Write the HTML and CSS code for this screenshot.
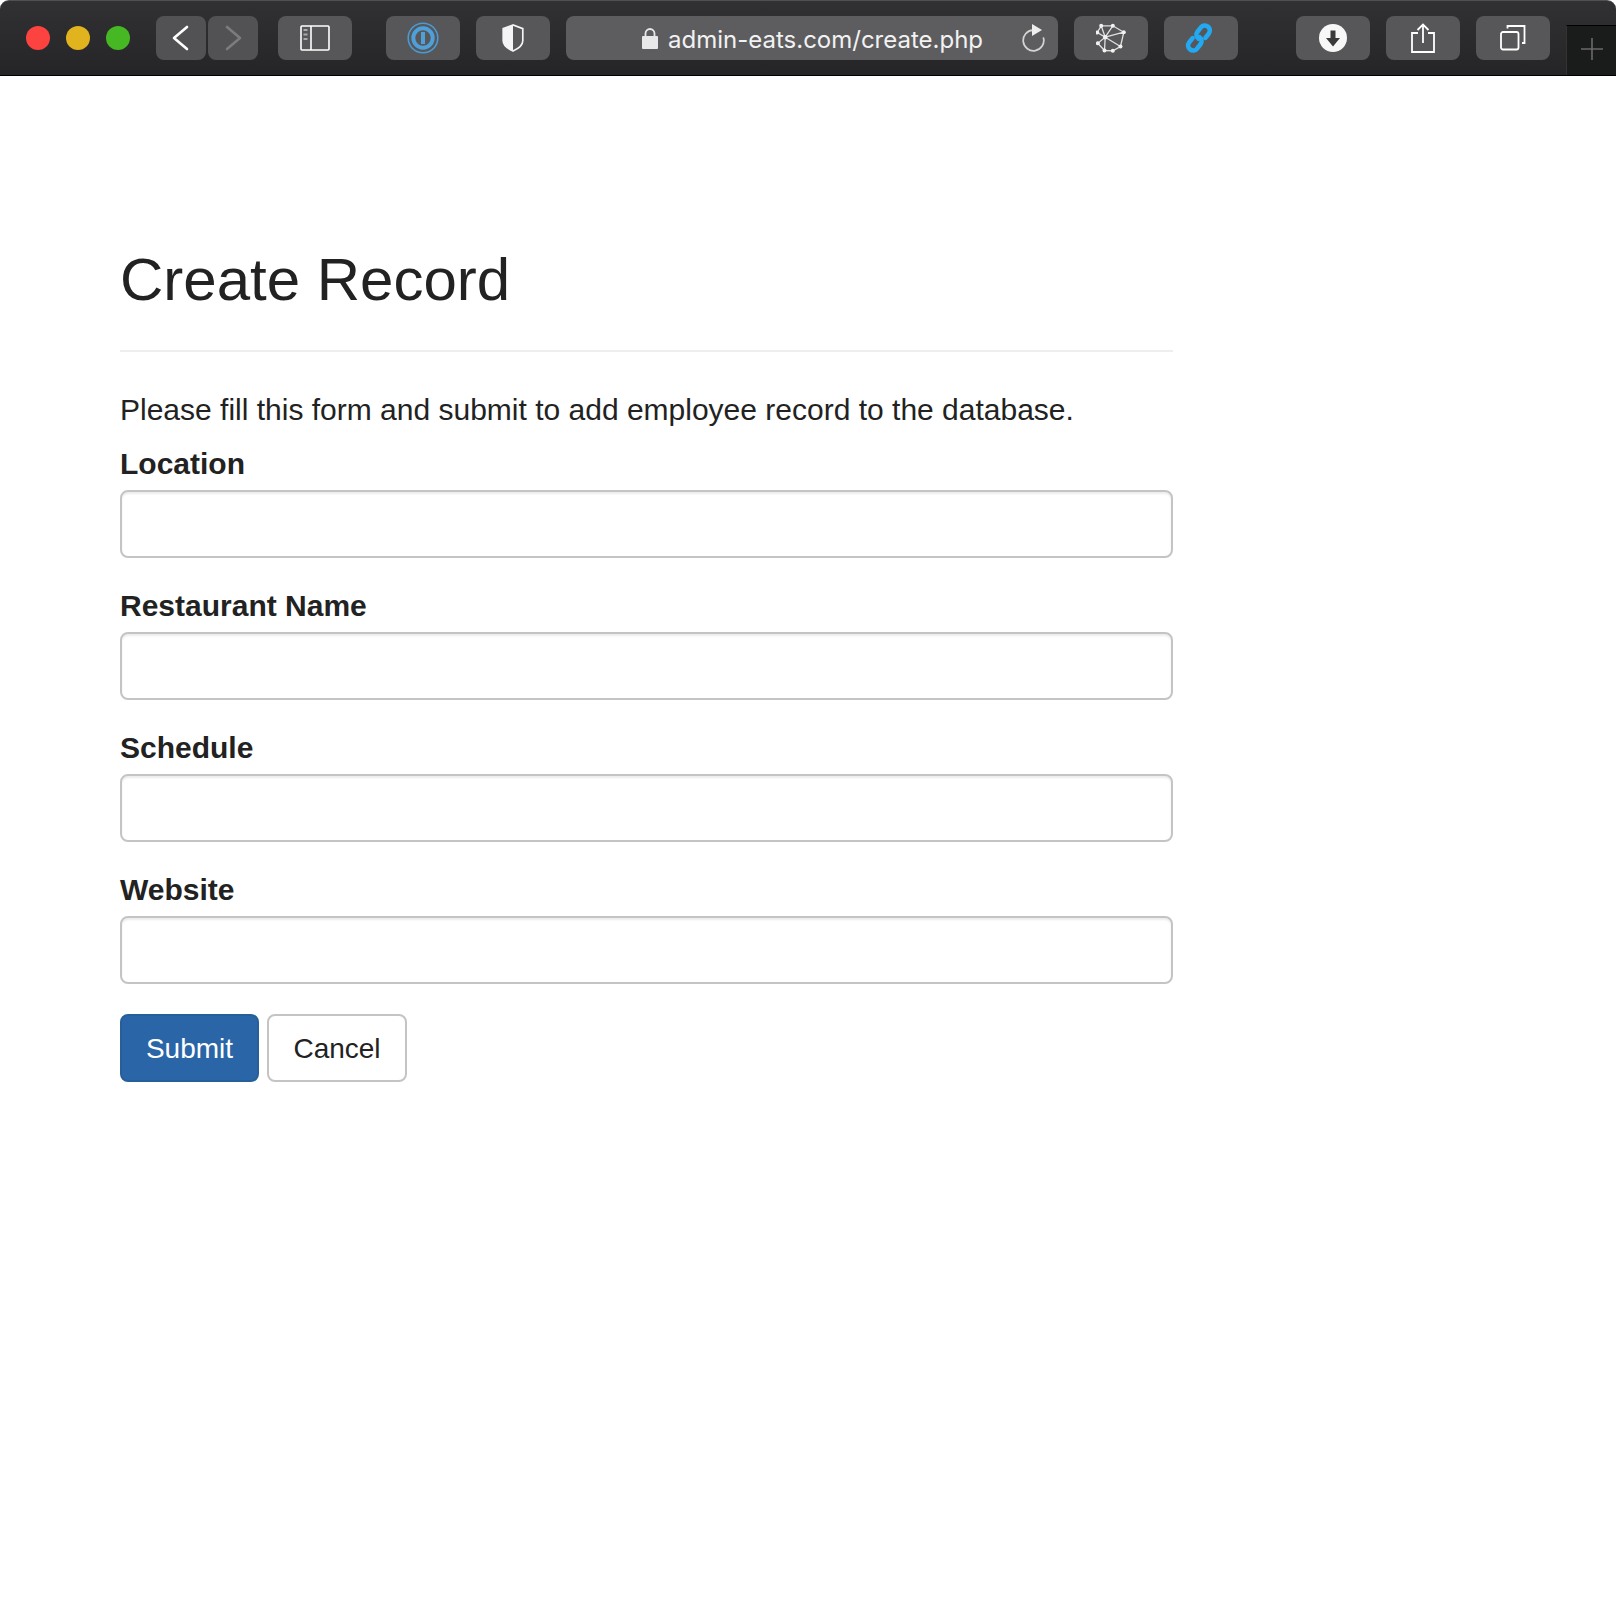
FILE: index.html
```html
<!DOCTYPE html>
<html lang="en">
<head>
<meta charset="UTF-8">
<meta name="viewport" content="width=device-width, initial-scale=1.0">
<title>Create Record</title>
<link rel="stylesheet" href="styles.css">
</head>
<body>

<div class="toolbar">
    <div class="lights">
        <span class="light red"></span>
        <span class="light yellow"></span>
        <span class="light green"></span>
    </div>
    <div class="nav-group">
        <div class="tool tool-nav">
            <svg width="50" height="44" viewBox="0 0 50 44"><path d="M31 11 18 22 31 33" fill="none" stroke="#fff" stroke-width="2.6" stroke-linecap="round" stroke-linejoin="round"/></svg>
        </div>
        <div class="tool tool-nav">
            <svg width="50" height="44" viewBox="0 0 50 44"><path d="M19 11 32 22 19 33" fill="none" stroke="#7c7c7c" stroke-width="2.6" stroke-linecap="round" stroke-linejoin="round"/></svg>
        </div>
    </div>
    <div class="tool tool-side">
        <svg width="30" height="26" viewBox="0 0 30 26"><rect x="1" y="1" width="28" height="24" rx="1" fill="none" stroke="#fff" stroke-width="1.6"/><path d="M11 1v24" stroke="#fff" stroke-width="1.6"/><path d="M3.5 5h4M3.5 9.5h4M3.5 14h4" stroke="#aaa" stroke-width="2"/></svg>
    </div>
    <div class="tool tool-onepass">
        <svg width="32" height="32" viewBox="0 0 32 32"><circle cx="16" cy="16" r="14.8" fill="none" stroke="#4a9ad4" stroke-width="1.6"/><circle cx="16" cy="16" r="9.7" fill="none" stroke="#4f9fd8" stroke-width="4"/><rect x="14" y="10" width="4" height="12" fill="#4f9fd8"/></svg>
    </div>
    <div class="tool tool-shield">
        <svg width="24" height="28" viewBox="0 0 24 30"><path d="M12 1 1.5 5v13c0 5 6 9 10.5 11 4.5-2 10.5-6 10.5-11V5z" fill="none" stroke="#f4f4f6" stroke-width="1.8"/><path d="M12 1 1.5 5v13c0 5 6 9 10.5 11z" fill="#f4f4f6"/></svg>
    </div>
    <div class="urlbar">
        <svg class="lock" width="16" height="21" viewBox="0 0 16 21"><path d="M3.5 9V5.5a4.500 4.500 0 0 1 9 0V9" fill="none" stroke="#e8e8e8" stroke-width="1.8"/><rect y="8" width="16" height="13" rx="1" fill="#e8e8e8"/></svg>
        <span class="url">admin-eats.com/create.php</span>
        <svg class="reload" width="24" height="28" viewBox="0 0 24 28"><path d="M11 6.2A10.300 10.300 0 1 0 21.500 14" fill="none" stroke="#d4d4d4" stroke-width="1.7" stroke-linecap="round"/><path d="M10 0l10 6-10 6z" fill="#eee"/></svg>
    </div>
    <div class="tool tool-graph">
        <svg width="30" height="30" viewBox="0 0 30 30"><path d="M1.2 9.500 5.200 2.800 16.800 2.800 27.800 9.200 24.500 23.500 16.800 27.800 8.500 27.500 1.800 20.200 9.200 14.200 1.200 9.500M9.200 14.200 5.200 2.800M9.200 14.200 16.800 2.800M9.200 14.200 27.800 9.200M9.200 14.200 24.500 23.500M9.200 14.200 8.500 27.500" fill="none" stroke="#e0e0e0" stroke-width="1.3"/><g fill="#f2f2f2"><circle cx="1.2" cy="9.500" r="2"/><circle cx="5.200" cy="2.800" r="2"/><circle cx="16.800" cy="2.800" r="2"/><circle cx="27.800" cy="9.200" r="2"/><circle cx="24.500" cy="23.500" r="2"/><circle cx="16.800" cy="27.800" r="2"/><circle cx="8.500" cy="27.500" r="2"/><circle cx="1.800" cy="20.200" r="2"/><circle cx="9.200" cy="14.200" r="2.200"/></g></svg>
    </div>
    <div class="tool tool-link">
        <svg class="link-icon" width="32" height="32" viewBox="0 0 32 32"><g fill="none" stroke="#22a9f2" stroke-width="4.6" stroke-linecap="round" transform="rotate(38 16 16)"><path d="M21 12V6.500a5 5 0 0 0-10 0V12a5 5 0 0 0 5 5"/><path d="M11 20v5.500a5 5 0 0 0 10 0V20a5 5 0 0 0-5-5"/></g></svg>
    </div>
    <div class="tool tool-down">
        <svg width="28" height="28" viewBox="0 0 28 28"><circle cx="14" cy="14" r="14" fill="#f7f7f7"/><path d="M11.500 6.500h5V14H21l-7 8.500L7 14h4.500z" fill="#3a3a3a"/></svg>
    </div>
    <div class="tool tool-share">
        <svg width="24" height="30" viewBox="0 0 24 30"><path d="M7 10H1v19h22V10h-6M12 20V1.500M6.500 7 12 1.500 17.500 7" fill="none" stroke="#fff" stroke-width="1.8"/></svg>
    </div>
    <div class="tool tool-tabs">
        <svg width="26" height="26" viewBox="0 0 26 26"><rect x="1" y="7" width="17.500" height="17.500" rx="2" fill="none" stroke="#fff" stroke-width="1.8"/><path d="M7.500 3.500V1h17v17H22" fill="none" stroke="#fff" stroke-width="1.8"/></svg>
    </div>
    <div class="new-tab">
        <svg width="22" height="22" viewBox="0 0 22 22"><path d="M11 0v22M0 11h22" stroke="#6a6a6a" stroke-width="1.6"/></svg>
    </div>
</div>

<div class="page">
    <h2 class="title">Create Record</h2>
    <p class="intro">Please fill this form and submit to add employee record to the database.</p>
    <form class="record-form">
        <div class="form-group">
            <label for="location">Location</label>
            <input type="text" id="location">
        </div>
        <div class="form-group">
            <label for="restaurant">Restaurant Name</label>
            <input type="text" id="restaurant">
        </div>
        <div class="form-group">
            <label for="schedule">Schedule</label>
            <input type="text" id="schedule">
        </div>
        <div class="form-group">
            <label for="website">Website</label>
            <input type="text" id="website">
        </div>
        <div class="actions">
            <button type="button" class="btn btn-primary">Submit</button>
            <a href="#" class="btn btn-default">Cancel</a>
        </div>
    </form>
</div>

</body>
</html>
```

FILE: styles.css
```css
* {
    box-sizing: border-box;
}

body {
    margin: 0;
    background-color: #fff;
    color: #222;
    font-family: "Liberation Sans", Arial, sans-serif;
}

.toolbar {
    position: relative;
    display: flex;
    align-items: flex-start;
    height: 76px;
    padding-top: 15px;
    border-top: 1px solid #505052;
    border-bottom: 1px solid #000;
    border-radius: 9px 9px 0 0;
    background: linear-gradient(#313133, #252527);
}

.lights {
    display: flex;
    gap: 16px;
    width: 156px;
    padding: 10px 0 0 26px;
}

.light {
    width: 24px;
    height: 24px;
    border-radius: 50%;
}

.red { background-color: #fd4340; }
.yellow { background-color: #e1b31e; }
.green { background-color: #45b823; }

.nav-group {
    display: flex;
    gap: 2px;
    margin-right: 20px;
}

.tool {
    display: flex;
    align-items: center;
    justify-content: center;
    width: 74px;
    height: 44px;
    border-radius: 8px;
    background-color: #575759;
}

.tool-nav {
    width: 50px;
    background-color: #525254;
}

.tool-side { margin-right: 34px; }
.tool-onepass { margin-right: 16px; }
.tool-shield { margin-right: 16px; }

.urlbar {
    display: flex;
    align-items: center;
    width: 492px;
    height: 44px;
    margin-right: 16px;
    padding: 0 12px 0 76px;
    border-radius: 8px;
    background-color: #5d5d5f;
}

.lock { margin-right: 10px; }

.url {
    padding-top: 2px;
    color: #f2f2f2;
    font-family: Inter, "Liberation Sans", sans-serif;
    font-size: 24px;
    white-space: nowrap;
}

.reload { margin-left: auto; }

.tool-graph { margin-right: 16px; }
.tool-link { margin-right: 58px; padding-right: 4px; }
.tool-down { margin-right: 16px; }
.tool-share { margin-right: 16px; }

.new-tab {
    position: absolute;
    top: 24px;
    right: 0;
    display: flex;
    align-items: center;
    justify-content: center;
    width: 50px;
    height: 50px;
    padding-bottom: 3px;
    border-top: 1px solid #000;
    border-left: 1px solid #333;
    background-color: #1a1b1b;
}

.page {
    width: 1053px;
    margin-left: 120px;
    padding-top: 170px;
}

.title {
    margin: 0;
    padding-bottom: 36px;
    border-bottom: 2px solid #eee;
    font-size: 60px;
    font-weight: 400;
    line-height: 68px;
}

.intro {
    margin: 0;
    padding-top: 37px;
    font-size: 30px;
    line-height: 41px;
}

.form-group {
    display: flex;
    flex-direction: column;
    height: 142px;
}

label {
    padding-top: 13px;
    font-size: 30px;
    font-weight: 700;
    line-height: 41px;
}

input {
    width: 100%;
    height: 68px;
    margin-top: 6px;
    border: 2px solid #c4c4c4;
    border-radius: 8px;
    box-shadow: inset 0 2px 2px rgba(0, 0, 0, 0.08);
}

.actions {
    display: flex;
    gap: 8px;
    padding-top: 16px;
}

.btn {
    display: flex;
    align-items: center;
    justify-content: center;
    width: 139px;
    height: 68px;
    padding-top: 2px;
    border: 2px solid #c4c4c4;
    border-radius: 8px;
    color: #222;
    font-family: inherit;
    font-size: 28px;
    text-decoration: none;
}

.btn-primary {
    border-color: #265f9a;
    background-color: #2a65a8;
    color: #fff;
}

.btn-default {
    width: 140px;
    background-color: #fff;
}
```
